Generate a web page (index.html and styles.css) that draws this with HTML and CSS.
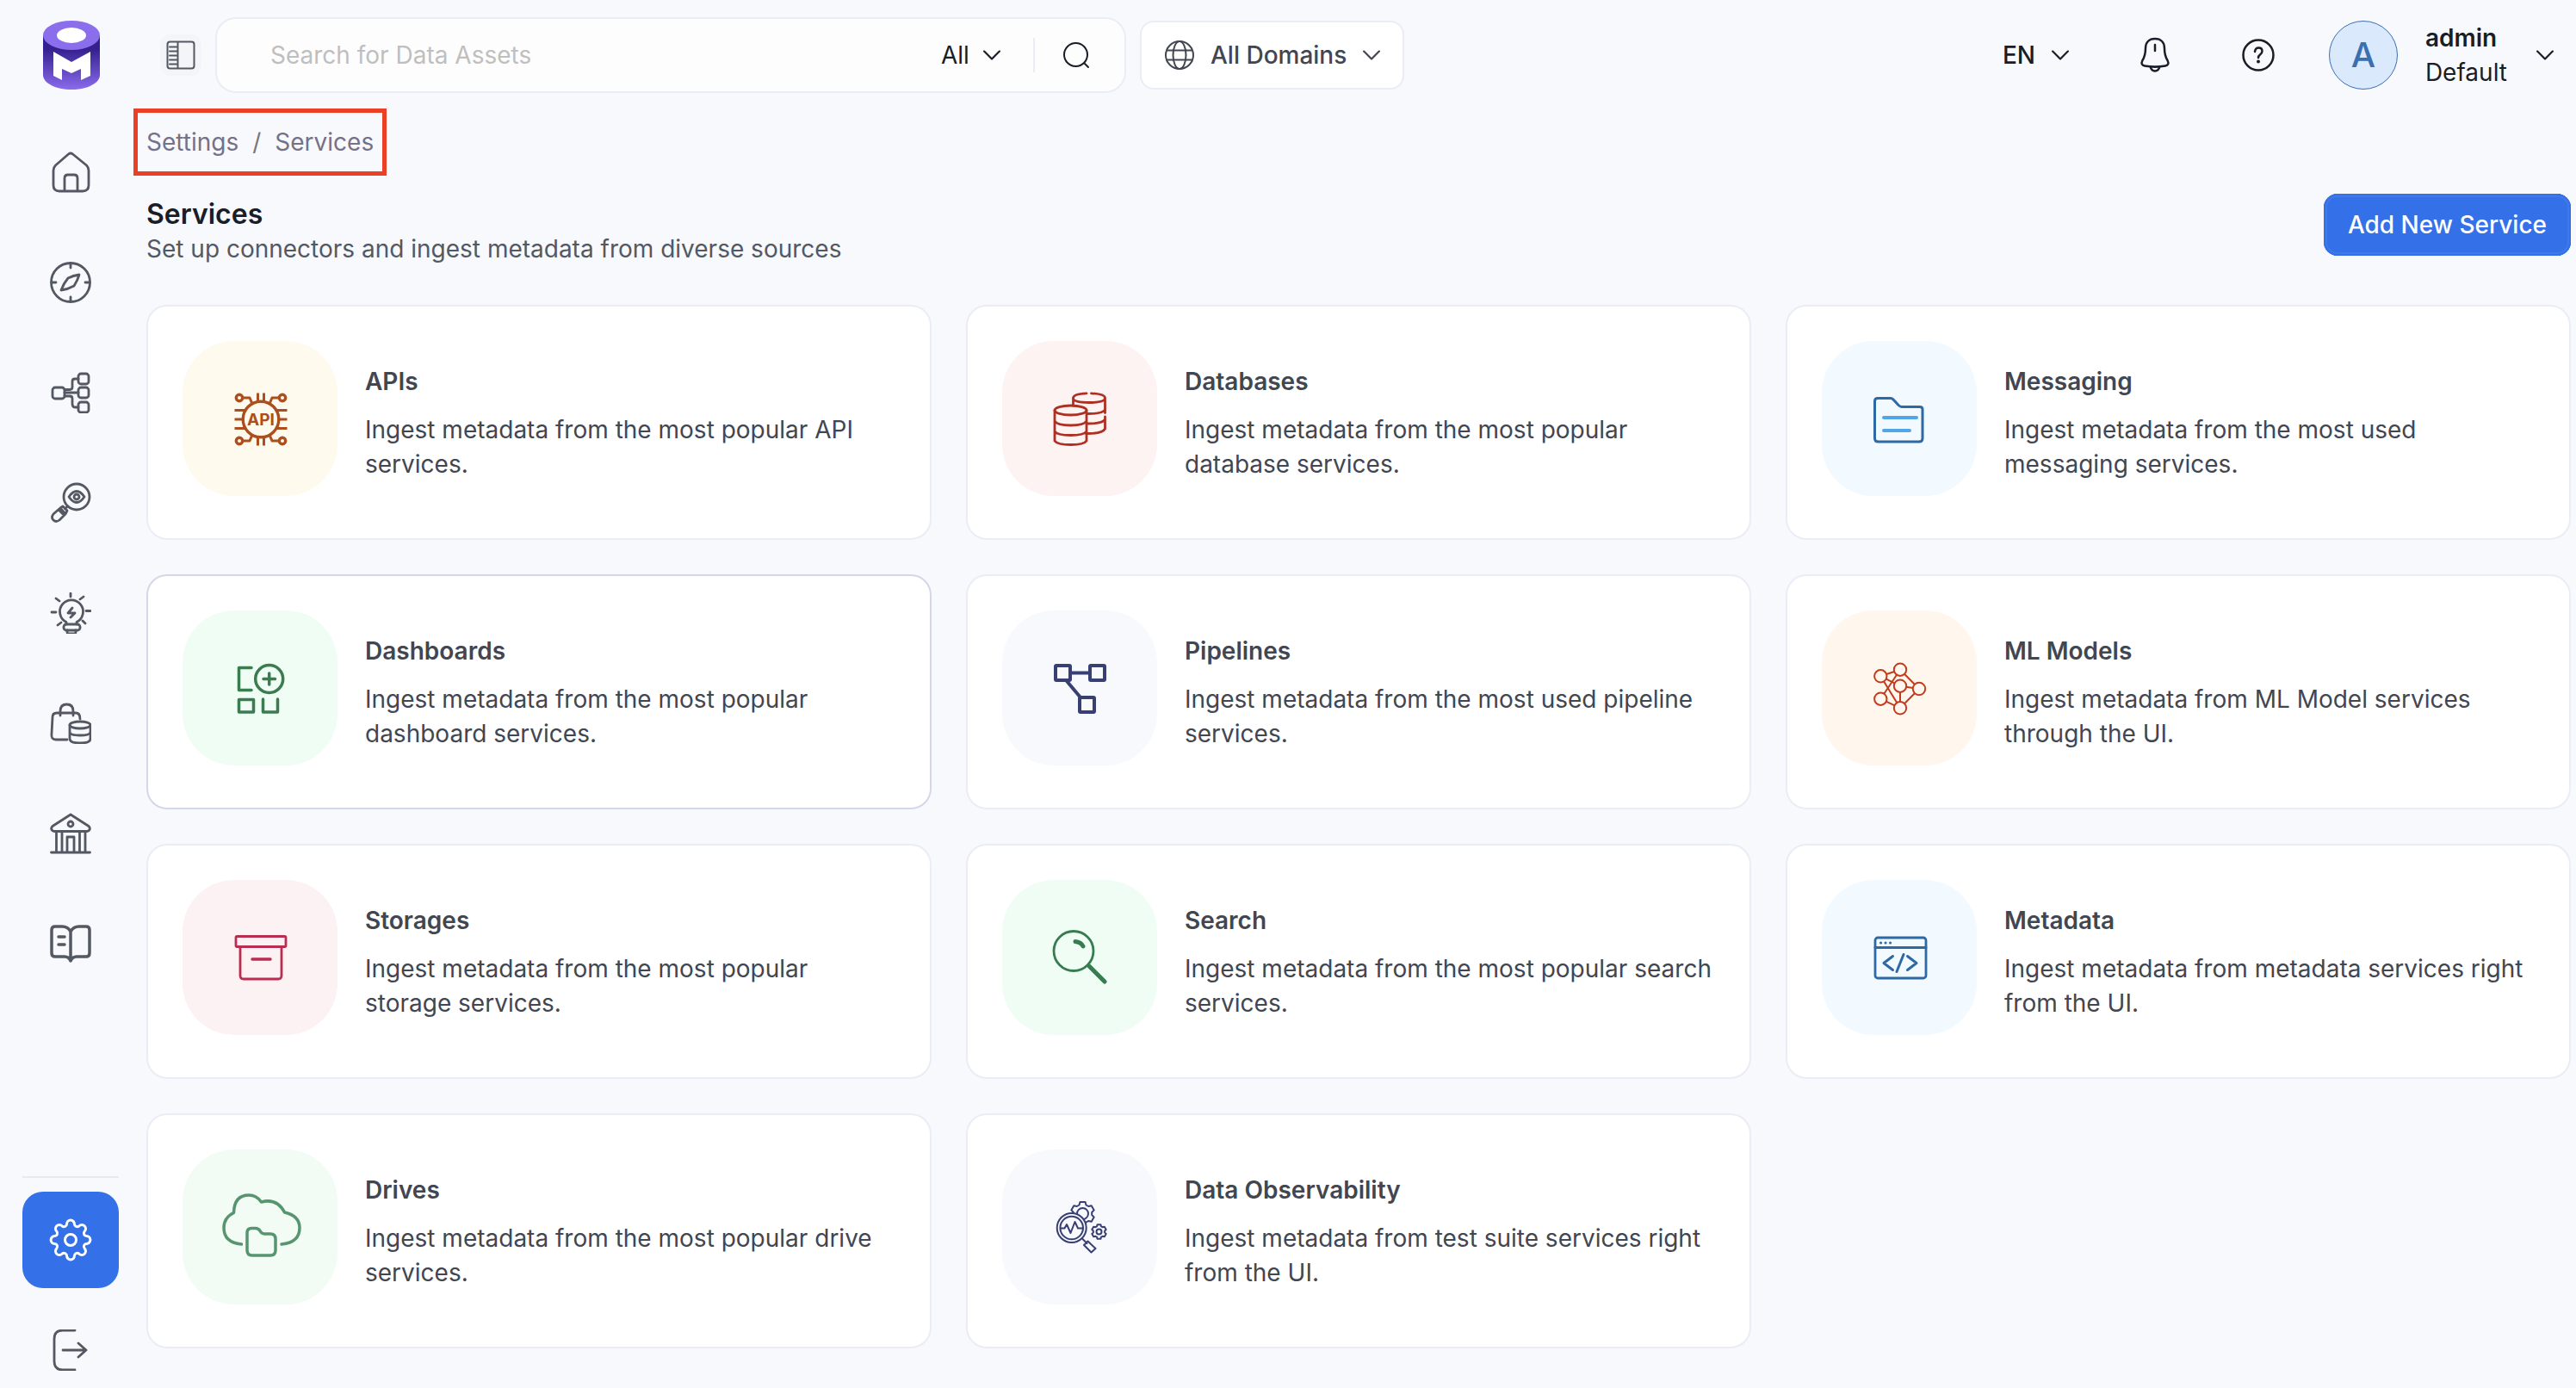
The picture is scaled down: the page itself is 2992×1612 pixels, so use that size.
FILE: index.html
```html
<!DOCTYPE html>
<html lang="en">
<head>
<meta charset="utf-8">
<meta name="viewport" content="width=device-width, initial-scale=1">
<title>Services</title>
<link rel="stylesheet" href="styles.css">
</head>
<body>
<div class="app">
  <nav class="sidebar" aria-label="Main">
    <a class="logo" href="#" aria-label="Home page">
      <svg width="66" height="80" viewBox="0 0 66 80">
        <defs><linearGradient id="body" x1="0" y1="0" x2="0" y2="1"><stop offset="0.25" stop-color="#35208f"/><stop offset="1" stop-color="#8a6bec"/></linearGradient></defs>
        <path d="M0 17v46c0 9.500 14.500 17 33 17s33-7.500 33-17V17z" fill="url(#body)"/>
        <ellipse cx="33" cy="17" rx="33" ry="17" fill="#8a6eec"/>
        <ellipse cx="33" cy="17" rx="17" ry="9" fill="#fff"/>
        <path d="M12 36l21 12 22-12v28l-11 5V56l-11 5-11-5v13l-10-5z" fill="#fff"/>
      </svg>
    </a>
    <ul class="nav-list">
      <li><a class="nav-item" href="#" aria-label="Home"><svg class="icon" viewBox="0 0 48 48"><path d="M21.500 3Q24 1 26.500 3l16 13Q45 18.500 45 22v17q0 7-7 7H11q-7 0-7-7V22q0-3.500 2.500-6zM17 46V31q0-4 4-4h7q4 0 4 4v15"/></svg></a></li>
      <li><a class="nav-item" href="#" aria-label="Explore"><svg class="icon" viewBox="0 0 48 48"><circle cx="24" cy="24" r="22.500"/><path d="M24 2v5M24 41v5M2 24h5M41 24h5M34 15q-7 1-13 4-5 6-8 14 8-1 15-5 4-6 6-13z"/></svg></a></li>
      <li><a class="nav-item" href="#" aria-label="Lineage"><svg class="icon" viewBox="0 0 48 48"><rect x="3" y="18" width="14" height="13" rx="3"/><rect x="33" y="2" width="12" height="12" rx="3"/><rect x="33" y="18" width="12" height="12" rx="3"/><rect x="33" y="35" width="12" height="12" rx="3"/><path d="M17 24h16M17 20.500h6q3 0 3-3V11q0-3 3-3h4M17 28h6q3 0 3 3v6q0 4 3 4h4"/></svg></a></li>
      <li><a class="nav-item" href="#" aria-label="Observability"><svg class="icon" viewBox="0 0 48 48"><circle cx="31" cy="17" r="15"/><path d="M22 17q9-13 18 0-9 13-18 0z"/><circle cx="31" cy="17" r="3"/><path d="M20.500 28l-3 3M12 30l3-2 5 5-2 4zM12 30l-8 7q-3 4 0 7 3 3 7 0l7-7M10 32l6 6"/></svg></a></li>
      <li><a class="nav-item" href="#" aria-label="Insights"><svg class="icon" viewBox="0 0 48 48"><path d="M19 37v-2.500a13.500 13.500 0 1 1 12 0V37"/><rect x="16" y="37" width="19" height="7" rx="3"/><path d="M20 44v2q0 2 2 2h6q2 0 2-2v-2M24 1v4M2 23h5M42 21.500h5M7 7l4 3M35 8l4-3M9 38l4-3M38 33l3 3M26 18l-5 6h8l-5 5"/></svg></a></li>
      <li><a class="nav-item" href="#" aria-label="Domains"><svg class="icon" viewBox="0 0 48 48"><path d="M20 43H7q-6 0-5-7L3 17q0-5 5-5h22q5 0 5 7M12 15v-5q0-8 7.500-8T27 10v5"/><ellipse cx="35" cy="26" rx="12" ry="4"/><path d="M23 26v16q0 5 12 5t12-5V26M23 34q0 4 12 4t12-4"/></svg></a></li>
      <li><a class="nav-item" href="#" aria-label="Governance"><svg class="icon" viewBox="0 0 48 48"><path d="M24 2L3 15.500q-2 2-1 4 1 2 3 2h38q2 0 3-2 1-2-1-4zM7.500 22v24M14 22v24M34.500 22v24M41 22v24M20 46V28h8v18M1.500 46h45"/><circle cx="24" cy="13" r="3"/></svg></a></li>
      <li><a class="nav-item" href="#" aria-label="Glossary"><svg class="icon icon-bold" viewBox="0 0 48 48"><path d="M24 10q-3-6-10-6H6Q2 4 2 8v27q0 4 4 4h11q5 0 7 5 2-5 7-5h11q4 0 4-4V8q0-4-4-4h-8q-7 0-10 6zM24 10v34M10 16h7M10 25h7"/></svg></a></li>
    </ul>
    <div class="nav-footer">
      <a class="settings" href="#" aria-label="Settings" aria-current="page"><svg width="56" height="56" viewBox="-28 -28 56 56"><path d="M-4.400-18.500A4.400 4.400 0 0 1 4.400-18.500A3.300 3.300 0 0 0 9.900-16.200A4.400 4.400 0 0 1 16.200-9.900A3.300 3.300 0 0 0 18.500-4.400A4.400 4.400 0 0 1 18.500 4.400A3.300 3.300 0 0 0 16.200 9.900A4.400 4.400 0 0 1 9.900 16.200A3.300 3.300 0 0 0 4.400 18.500A4.400 4.400 0 0 1-4.400 18.500A3.300 3.300 0 0 0-9.900 16.200A4.400 4.400 0 0 1-16.200 9.900A3.300 3.300 0 0 0-18.500 4.400A4.400 4.400 0 0 1-18.500-4.400A3.300 3.300 0 0 0-16.200-9.900A4.400 4.400 0 0 1-9.900-16.200A3.300 3.300 0 0 0-4.400-18.500z"/><circle r="6.500"/></svg></a>
      <a class="nav-item" href="#" aria-label="Log out"><svg class="icon" viewBox="0 0 48 48"><path d="M29 1H15Q5 1 5 11v26q0 10 10 10h14M15 24h27M33 16l9 8-9 8"/></svg></a>
    </div>
  </nav>

  <div class="page">
    <header class="topbar">
      <button class="toggle" type="button" aria-label="Toggle sidebar"><svg width="34" height="34" viewBox="0 0 34 34"><rect x="1.500" y="1.500" width="31" height="31" rx="3"/><path d="M13.500 2v30M4 7.500h9M4 12.500h9M4 17.500h9M4 22.500h9M4 27.500h9"/></svg></button>
      <form class="search" role="search">
        <input class="search-input" type="search" placeholder="Search for Data Assets" aria-label="Search for Data Assets">
        <span class="picker">
          <select aria-label="Asset type"><option>All</option></select>
          <svg class="chevron" viewBox="0 0 18 10"><path d="M1 1l8 8 8-8"/></svg>
        </span>
        <span class="divider"></span>
        <button class="search-button" type="submit" aria-label="Search"><svg width="32" height="32" viewBox="0 0 32 32"><circle cx="15.500" cy="15.500" r="13.500"/><path d="M26 26l4 4"/></svg></button>
      </form>
      <label class="picker domains">
        <svg class="globe" width="36" height="36" viewBox="0 0 36 36"><circle cx="18" cy="18" r="16"/><ellipse cx="18" cy="18" rx="7.500" ry="16"/><path d="M4 12.500h28M4 23.500h28"/></svg>
        <select aria-label="Domain"><option>All Domains</option></select>
        <svg class="chevron" viewBox="0 0 18 10"><path d="M1 1l8 8 8-8"/></svg>
      </label>
      <div class="tools">
        <span class="picker language">
          <select aria-label="Language"><option>EN</option></select>
          <svg class="chevron" viewBox="0 0 18 10"><path d="M1 1l8 8 8-8"/></svg>
        </span>
        <button class="tool" type="button" aria-label="Notifications"><svg width="48" height="48" viewBox="0 0 48 48"><path d="M24 5c-7 0-11 4.500-11 11 0 7-1 10-3.500 14-2 4-.5 6 2.500 6.500 8 1.500 16 1.500 24 0 3-.5 4.500-2.500 2.500-6.500-2.500-4-3.500-7-3.500-14 0-6.500-4-11-11-11zM24 12v7M18.500 37.500q1.500 5 5.500 5t5.500-5"/></svg></button>
        <button class="tool" type="button" aria-label="Help"><svg width="48" height="48" viewBox="0 0 48 48"><circle cx="24" cy="24" r="17.500"/><path d="M20 20q.5-4.500 4.500-4.500 4 0 4 4 0 2-2.500 4-2 1.500-2 3.500"/><circle class="dot" cx="24" cy="31.500" r="2"/></svg></button>
        <button class="profile" type="button">
          <span class="avatar">A</span>
          <span class="identity"><span class="user-name">admin</span><span>Default</span></span>
          <svg class="chevron" viewBox="0 0 18 10"><path d="M1 1l8 8 8-8"/></svg>
        </button>
      </div>
    </header>

    <main>
      <nav class="breadcrumb" aria-label="Breadcrumb"><a href="#">Settings</a><span class="slash">/</span><a href="#">Services</a></nav>
      <div class="page-head">
        <div class="page-title">
          <h1>Services</h1>
          <p>Set up connectors and ingest metadata from diverse sources</p>
        </div>
        <button class="primary" type="button">Add New Service</button>
      </div>

      <section class="cards" aria-label="Service types">
        <a class="card" href="#">
          <span class="tile apis"><svg viewBox="0 0 96 96"><g stroke-width="3.400"><circle cx="49" cy="49" r="20.800"/><circle cx="24" cy="24" r="3.700"/><circle cx="74" cy="24" r="3.700"/><circle cx="24" cy="74" r="3.700"/><circle cx="74" cy="74" r="3.700"/></g><path stroke-width="3" stroke-linecap="butt" d="M28 24h8l3 7M70 24h-8l-3 7M28 74h8l3-7M70 74h-8l-3-7M45.500 18.500V29M52.500 18.500V29M45.500 69v10.500M52.500 69v10.500M18.500 38.500H31M18.500 49H29M18.500 59.500H31M67 38.500h12.500M69 49h10.500M67 59.500h12.500"/><text x="49" y="56" text-anchor="middle">API</text></svg></span>
          <span class="copy"><strong>APIs</strong><span>Ingest metadata from the most popular API services.</span></span>
        </a>
        <a class="card" href="#">
          <span class="tile databases"><svg viewBox="0 0 96 96"><ellipse cx="37.500" cy="38.500" rx="18.500" ry="5.500"/><path d="M19 38.500V74q3 4.500 18.500 4.500T56 74V38.500M19 51q3 5 18.500 5T56 51M19 63q3 4.500 18.500 4.500T56 63M56 18.800q-15.500.7-15.500 5.500 0 5.200 18.500 5.200t18.500-5.200q0-4.600-16-5.500M40.500 24v9M77.500 24v17.500M77.500 46v14q-3 5.500-20 5.500M77.500 38q-3 4.500-20 4.500M77.500 49q-3 5-20 5"/></svg></span>
          <span class="copy"><strong>Databases</strong><span>Ingest metadata from the most popular database services.</span></span>
        </a>
        <a class="card" href="#">
          <span class="tile messaging"><svg viewBox="0 0 96 96"><path stroke-width="3" d="M23 24.500h15q2 0 4 2.500l5 5.500q2 2 4 2h21q3 0 3 3V71q0 4-4 4H23.500q-4 0-4-4V28q0-3.500 3.500-3.500z"/><path class="lines" d="M30 47h38M30 62h30"/></svg></span>
          <span class="copy"><strong>Messaging</strong><span>Ingest metadata from the most used messaging services.</span></span>
        </a>
        <a class="card is-active" href="#">
          <span class="tile dashboards"><svg viewBox="0 0 96 96"><g stroke-width="3.500"><path d="M38 24.500H23.500v26H38M51.500 61v15h17V61"/><rect x="23.500" y="61.500" width="17" height="14.500"/><circle cx="58.700" cy="37.500" r="16"/><path d="M58.700 31v13M52 37.500h13.500"/></g></svg></span>
          <span class="copy"><strong>Dashboards</strong><span>Ingest metadata from the most popular dashboard services.</span></span>
        </a>
        <a class="card" href="#">
          <span class="tile pipelines"><svg viewBox="0 0 96 96"><g stroke-width="4"><rect x="20" y="22" width="17" height="17" rx="1"/><rect x="60" y="22" width="17" height="17" rx="1"/><rect x="48" y="59" width="17" height="17" rx="1"/><path d="M38 30.500h20M33 40l16 19"/></g></svg></span>
          <span class="copy"><strong>Pipelines</strong><span>Ingest metadata from the most used pipeline services.</span></span>
        </a>
        <a class="card" href="#">
          <span class="tile ml"><svg viewBox="0 0 96 96"><path d="M26.300 34.300L49 26.700 71 49 49 71.300 26.300 60.700 49 26.700M49 71.300L26.300 34.300 49 45.700 71 49M49 45.700v25.600"/><g fill="#fff7ed"><circle cx="26.300" cy="34.300" r="7.200"/><circle cx="49" cy="26.700" r="7.200"/><circle cx="49" cy="45.700" r="7.200"/><circle cx="71" cy="49" r="7.200"/><circle cx="26.300" cy="60.700" r="7.200"/><circle cx="49" cy="71.300" r="7.200"/></g></svg></span>
          <span class="copy"><strong>ML Models</strong><span>Ingest metadata from ML Model services through the UI.</span></span>
        </a>
        <a class="card" href="#">
          <span class="tile storages"><svg viewBox="0 0 96 96"><rect x="20" y="23.500" width="58" height="12" rx="1.500"/><path d="M25 36v33q0 4 4 4h40q4 0 4-4V36"/><path stroke-width="3.500" d="M39 50h21"/></svg></span>
          <span class="copy"><strong>Storages</strong><span>Ingest metadata from the most popular storage services.</span></span>
        </a>
        <a class="card" href="#">
          <span class="tile search-tile"><svg viewBox="0 0 96 96"><circle cx="41" cy="40.500" r="23" stroke-width="2.800"/><path stroke-width="5" d="M59 58l18 18M43 29.500q6.500.5 9 5.500"/></svg></span>
          <span class="copy"><strong>Search</strong><span>Ingest metadata from the most popular search services.</span></span>
        </a>
        <a class="card" href="#">
          <span class="tile metadata"><svg viewBox="0 0 96 96"><rect x="20" y="25" width="59" height="47" rx="3"/><path d="M20 36.500h59"/><path stroke-width="3" d="M26.500 31h.1M32 31h.1M37.500 31h.1M40.500 46.500L30 54.500l10.500 8M53 44.500l-8 20M57.500 46.500l10.500 8-10.500 8"/></svg></span>
          <span class="copy"><strong>Metadata</strong><span>Ingest metadata from metadata services right from the UI.</span></span>
        </a>
        <a class="card" href="#">
          <span class="tile drives"><svg viewBox="0 0 96 96"><g stroke-width="3.500"><path d="M26.500 68Q6 66 6 49q0-12 11.500-17.500Q18 11 35 11q9 0 14.500 8 18-5 27 12Q94 35 94 49q0 17-21 19"/><path d="M38 49.500h5q3 0 5 3 2 3.500 5 3.500h7q6 0 6 6v13q0 6-6 6H39q-6 0-6-6V55q0-5.500 5-5.500z"/></g></svg></span>
          <span class="copy"><strong>Drives</strong><span>Ingest metadata from the most popular drive services.</span></span>
        </a>
        <a class="card" href="#">
          <span class="tile observability"><svg viewBox="0 0 96 96"><defs><path id="cog" vector-effect="non-scaling-stroke" d="M-4-10l1-3.500h6l1 3.500L6.700-8.500l3.500-.8 3 5.200-2.500 2.600v3l2.500 2.600-3 5.200-3.500-.8L4 10l-1 3.500h-6L-4 10l-2.700-1.500-3.500.8-3-5.200 2.500-2.600v-3l-2.500-2.600 3-5.200 3.500.8z"/></defs><use href="#cog" x="51.500" y="32.500"/><circle cx="51.500" cy="32.500" r="6.500"/><use href="#cog" transform="translate(70.500 53.500) scale(.62)"/><circle cx="70.500" cy="53.500" r="3"/><circle cx="38.700" cy="49" r="17" fill="#f8f9fd"/><circle cx="38.700" cy="49" r="13.300"/><path d="M26 49.500h4.500L33 45l4.500 10L42.500 42l3.500 7.500h6M51.500 62l5 5M57.500 64.500l9 8.500-5 4.500-8.500-8.500z"/></svg></span>
          <span class="copy"><strong>Data Observability</strong><span>Ingest metadata from test suite services right from the UI.</span></span>
        </a>
      </section>
    </main>
  </div>
</div>
</body>
</html>
```
FILE: styles.css
```css
* {
  box-sizing: border-box;
}

body {
  margin: 0;
  background: #f8f9fd;
  color: #181d27;
  font: 400 28px/40px Inter, "Liberation Sans", sans-serif;
}

h1, p, ul {
  margin: 0;
  padding: 0;
}

a {
  color: inherit;
  text-decoration: none;
}

button, input, select {
  margin: 0;
  padding: 0;
  border: 0;
  background: none;
  color: inherit;
  font: inherit;
}

svg {
  display: block;
  flex: none;
  fill: none;
  stroke: currentColor;
  stroke-width: 2;
  stroke-linecap: round;
  stroke-linejoin: round;
}

.app {
  display: grid;
  grid-template-columns: 164px minmax(0, 1fr);
  min-height: 100vh;
}

/* Sidebar */
.sidebar {
  display: flex;
  flex-direction: column;
  align-items: center;
  padding: 24px 0 20px;
  color: #535862;
}

.logo svg {
  stroke: none;
}

.logo {
  margin-left: 2px;
}

.nav-list {
  display: flex;
  flex-direction: column;
  gap: 80px;
  margin-top: 72px;
  list-style: none;
}

.nav-item {
  display: block;
}

.icon {
  width: 48px;
  height: 48px;
  stroke-width: 2.8;
}

.icon-bold {
  stroke-width: 3.5;
}

.nav-footer {
  display: flex;
  flex-direction: column;
  align-items: center;
  gap: 48px;
  margin-top: auto;
  padding-top: 16px;
  border-top: 2px solid #e9eaf0;
}

.settings {
  display: grid;
  place-items: center;
  width: 112px;
  height: 112px;
  border-radius: 24px;
  background: #3470e8;
  color: #fff;
}

.settings svg {
  stroke-width: 3;
}

/* Top bar */
.page {
  padding: 20px 6px;
}

.topbar {
  display: flex;
  align-items: center;
  height: 88px;
  padding: 0 20px 0 16px;
}

.toggle {
  display: grid;
  place-items: center;
  width: 48px;
  height: 48px;
  margin-right: 16px;
  border-radius: 12px;
  background: #f4f5f9;
  color: #535862;
}

.search {
  display: flex;
  align-items: center;
  flex: 0 1 1058px;
  height: 88px;
  padding: 0 40px 0 62px;
  border: 2px solid #ebecf5;
  border-radius: 24px;
  background: #fdfdfd;
}

.search-input {
  flex: 1;
  min-width: 0;
  outline: 0;
  appearance: none;
}

.search-input::placeholder {
  color: #bfbfbf;
  opacity: 1;
}

.picker {
  display: flex;
  align-items: center;
  gap: 16px;
}

.picker select {
  appearance: none;
}

.chevron {
  width: 20px;
  height: 12px;
}

.divider {
  width: 2px;
  height: 40px;
  margin: 0 32px 0 38px;
  background: #ebecf5;
}

.domains {
  gap: 18px;
  height: 80px;
  margin-left: 16px;
  padding: 0 26px;
  border: 2px solid #ebecf5;
  border-radius: 16px;
  background: #fff;
  color: #414651;
}

.domains select {
  font-weight: 500;
}

.picker .chevron {
  pointer-events: none;
}

.tools {
  display: flex;
  align-items: center;
  gap: 72px;
  margin-left: auto;
}

.language {
  gap: 18px;
  margin-right: 4px;
  font-weight: 500;
}

.tool svg {
  stroke-width: 2.5;
}

.tool .dot {
  fill: currentColor;
  stroke: none;
}

.profile {
  display: flex;
  align-items: center;
  gap: 32px;
  margin-left: -14px;
  text-align: left;
}

.avatar {
  display: grid;
  place-items: center;
  width: 80px;
  height: 80px;
  border: 1px solid #3a6fb0;
  border-radius: 50%;
  background: #dbe9fc;
  color: #3a6fb0;
  font-size: 40px;
  font-weight: 500;
}

.identity {
  display: flex;
  flex-direction: column;
  padding-right: 2px;
}

.user-name {
  font-weight: 600;
}

/* Page heading */
.breadcrumb {
  display: flex;
  gap: 16px;
  width: max-content;
  margin: 18px 0 0 -15px;
  padding: 12px 10px;
  border: 5px solid #eb4025;
  color: #757189;
  line-height: 44px;
}

.slash {
  color: #77777c;
}

.page-head {
  display: flex;
  align-items: flex-start;
  justify-content: space-between;
  margin: 21px 0 45px;
}

.page-title {
  padding-top: 3px;
  color: #535862;
}

.page-title h1 {
  color: #181d27;
  font-size: 32px;
  font-weight: 600;
  line-height: 41px;
}

.primary {
  height: 72px;
  padding: 0 28px;
  border-radius: 16px;
  background: #3470e8;
  box-shadow: inset 0 0 0 2px #3470e8, inset 0 0 0 4px #4178ea;
  color: #fff;
  font-weight: 500;
}

/* Service cards */
.cards {
  display: grid;
  grid-template-columns: repeat(3, minmax(0, 1fr));
  gap: 40px;
}

.card {
  display: flex;
  gap: 32px;
  min-height: 273px;
  padding: 40px;
  border: 2px solid #ebecf5;
  border-radius: 24px;
  background: #fff;
  color: #414651;
}

.card.is-active {
  border-color: #d5d6e9;
}

.tile {
  display: grid;
  place-items: center;
  flex: none;
  width: 180px;
  height: 180px;
  border-radius: 60px;
}

.tile svg {
  width: 96px;
  height: 96px;
}

.tile text {
  fill: currentColor;
  stroke: none;
  font-size: 19px;
  font-weight: 700;
}

.copy {
  display: flex;
  flex-direction: column;
  justify-content: center;
  gap: 16px;
}

.copy strong {
  font-weight: 600;
}

.apis { background: #fffaee; color: #ab4f1e; }
.databases { background: #fcf3f2; color: #ae3022; }
.messaging { background: #f2f9ff; color: #2d69a4; }
.messaging .lines { stroke: #4fa6e9; stroke-width: 4; }
.dashboards { background: #f0fdf4; color: #3a7c50; }
.pipelines { background: #f8f9fd; color: #383f72; }
.ml { background: #fff7ed; color: #c13c1e; }
.storages { background: #fcf1f3; color: #b92d50; }
.search-tile { background: #effdf4; color: #367c50; }
.metadata { background: #f2f9ff; color: #2d69a4; }
.drives { background: #f2fbf4; color: #579570; }
.observability { background: #f8f9fd; color: #383f72; }

.databases svg,
.storages svg,
.metadata svg {
  stroke-width: 2.8;
}
```
